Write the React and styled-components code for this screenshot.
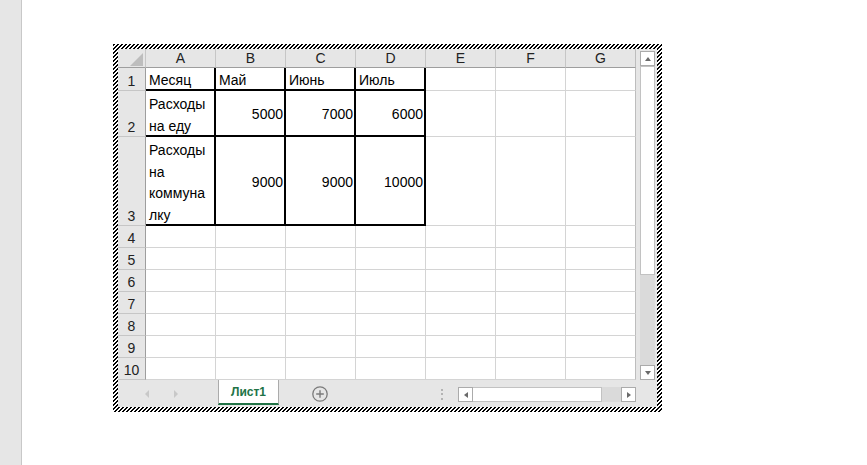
import React from 'react';
import styled, { createGlobalStyle } from 'styled-components';

const GlobalStyle = createGlobalStyle`
  *, *::before, *::after { box-sizing: border-box; }
  html, body { margin: 0; padding: 0; background: #fff; }
  body { font-family: "Liberation Sans", Arial, sans-serif; color: #000; }
`;

const GRID = '#d4d4d4';
const HEAD_LINE = '#c6c6c6';
const HEAD_EDGE = '#9e9e9e';
const GREEN = '#217346';

// 4x4 tile of crisp "/" hatching for the object selection frame
const HATCH_TILE =
  "url(\"data:image/svg+xml,%3Csvg xmlns='http://www.w3.org/2000/svg' width='4' height='4' shape-rendering='crispEdges'%3E%3Cpath d='M0 0h2v1H0zM0 1h1v1H0zM3 1h1v1H3zM2 2h2v1H2zM1 3h2v1H1z' fill='%23000'/%3E%3C/svg%3E\")";

const Page = styled.div`
  display: flex;
  width: 867px;
  height: 465px;
  overflow: hidden;
`;

const SideStrip = styled.div`
  width: 22px;
  flex-shrink: 0;
  background: #e6e6e6;
  border-right: 1px solid #c8c8c8;
`;

const Canvas = styled.div`
  flex: 1;
  padding: 44px 0 0 91px;
`;

const HatchFrame = styled.div`
  width: 549px;
  height: 368px;
  padding: 5px;
  background-color: #fff;
  background-image: ${HATCH_TILE};
  background-size: 4px 4px;
`;

const Workbook = styled.div`
  display: grid;
  grid-template-columns: 518px 21px;
  grid-template-rows: 331px 27px;
  height: 100%;
  background: #fff;
`;

const Sheet = styled.div`
  display: flex;
  flex-direction: column;
`;

const HeaderRow = styled.div`
  display: flex;
  height: 19px;
  background: #e6e6e6;
`;

const Corner = styled.div`
  width: 28px;
  display: flex;
  align-items: flex-end;
  justify-content: flex-end;
  padding: 0 2px 1px 0;
  border-right: 1px solid ${HEAD_LINE};
  border-bottom: 1px solid ${HEAD_EDGE};
`;

const ColHead = styled.div`
  width: 70px;
  display: flex;
  align-items: center;
  justify-content: center;
  font-size: 14px;
  color: #222;
  border-right: 1px solid ${(p) => (p.$last ? '#bdbdbd' : HEAD_LINE)};
  border-bottom: 1px solid ${HEAD_EDGE};
`;

const Row = styled.div`
  display: flex;
  height: ${(p) => p.$h}px;
`;

const RowHead = styled.div`
  width: 28px;
  display: flex;
  align-items: flex-end;
  justify-content: center;
  background: #e6e6e6;
  font-size: 14px;
  line-height: 18px;
  color: #222;
  border-right: 1px solid ${HEAD_EDGE};
  border-bottom: 1px solid ${HEAD_LINE};
`;

const Cell = styled.div`
  width: 70px;
  display: flex;
  align-items: ${(p) => (p.$num ? 'center' : 'flex-end')};
  justify-content: ${(p) => (p.$num ? 'flex-end' : 'flex-start')};
  padding: ${(p) => (p.$num ? '4px 1px 0 2px' : '0 1px 0 3px')};
  font-size: 14px;
  line-height: 21.5px;
  white-space: nowrap;
  border-right: ${(p) =>
    p.$boxed ? '2px solid #000' : `1px solid ${p.$last ? '#bdbdbd' : GRID}`};
  border-bottom: ${(p) => (p.$boxed ? '2px solid #000' : `1px solid ${GRID}`)};
`;

const CellText = styled.span`
  margin-bottom: ${(p) => (p.$num ? 0 : -2)}px;
`;

const VScroll = styled.div`
  display: flex;
  flex-direction: column;
  background: #e6e6e6;
  padding: 2px 2px 0 4px;
`;

const ArrowButton = styled.div`
  width: 15px;
  height: 15px;
  flex-shrink: 0;
  display: flex;
  align-items: center;
  justify-content: center;
  background: #fff;
  border: 1px solid #ababab;
`;

const Triangle = styled.span`
  width: 0;
  height: 0;
  border-style: solid;
  border-color: transparent;
  ${(p) =>
    p.$dir === 'up' && `border-width: 0 3.5px 4px 3.5px; border-bottom-color: ${p.$color};`}
  ${(p) =>
    p.$dir === 'down' && `border-width: 4px 3.5px 0 3.5px; border-top-color: ${p.$color};`}
  ${(p) =>
    p.$dir === 'left' && `border-width: ${p.$h || 3.5}px 4px ${p.$h || 3.5}px 0; border-right-color: ${p.$color};`}
  ${(p) =>
    p.$dir === 'right' && `border-width: ${p.$h || 3.5}px 0 ${p.$h || 3.5}px 4px; border-left-color: ${p.$color};`}
`;

const VTrack = styled.div`
  flex: 1;
  display: flex;
  flex-direction: column;
  background: #dadada;
`;

const VThumb = styled.div`
  height: 209px;
  background: #fff;
  border: 1px solid #c2c2c2;
`;

const TabBar = styled.div`
  grid-column: 1 / -1;
  display: flex;
  align-items: center;
  background: #e6e6e6;
`;

const SheetNav = styled.div`
  width: 100px;
  align-self: stretch;
  display: flex;
  align-items: center;
  gap: 25px;
  padding-left: 27px;
`;

const SheetTab = styled.div`
  width: 61px;
  height: 25px;
  align-self: flex-start;
  display: flex;
  align-items: center;
  justify-content: center;
  padding-top: 1px;
  background: #fff;
  border-left: 1px solid #ababab;
  border-right: 1px solid #ababab;
  border-bottom: 2px solid ${GREEN};
  color: ${GREEN};
  font-size: 12px;
  font-weight: bold;
`;

const AddSheet = styled.div`
  margin-left: 33px;
  width: 16px;
  height: 16px;
  display: flex;
`;

const Spacer = styled.div`
  flex: 1;
`;

const Grip = styled.div`
  display: flex;
  flex-direction: column;
  gap: 2.5px;
  margin-right: 15px;
  padding-top: 1px;

  & span {
    width: 2px;
    height: 2px;
    background: #b3b3b3;
  }
`;

const HScroll = styled.div`
  display: flex;
  width: 178px;
  height: 15px;
  margin-right: 21px;
  margin-top: 2px;
`;

const HThumb = styled.div`
  width: 129px;
  background: #fff;
  border: 1px solid #c2c2c2;
  border-left: none;
`;

const HTrack = styled.div`
  flex: 1;
  background: #dadada;
`;

const columns = ['A', 'B', 'C', 'D', 'E', 'F', 'G'];

const rows = [
  { n: 1, h: 23, cells: ['Месяц', 'Май', 'Июнь', 'Июль'] },
  { n: 2, h: 46, cells: [['Расходы', 'на еду'], 5000, 7000, 6000] },
  { n: 3, h: 89, cells: [['Расходы', 'на', 'коммуна', 'лку'], 9000, 9000, 10000] },
  { n: 4, h: 22 },
  { n: 5, h: 22 },
  { n: 6, h: 22 },
  { n: 7, h: 22 },
  { n: 8, h: 22 },
  { n: 9, h: 22 },
  { n: 10, h: 22 },
];

function CellContent({ value }) {
  if (Array.isArray(value)) {
    return (
      <CellText>
        {value.map((line, i) => (
          <React.Fragment key={i}>
            {i > 0 && <br />}
            {line}
          </React.Fragment>
        ))}
      </CellText>
    );
  }
  return <CellText $num={typeof value === 'number'}>{value}</CellText>;
}

export default function App() {
  return (
    <>
      <GlobalStyle />
      <Page>
        <SideStrip />
        <Canvas>
          <HatchFrame>
            <Workbook>
              <Sheet>
                <HeaderRow>
                  <Corner>
                    <svg width="13" height="13" viewBox="0 0 13 13">
                      <polygon points="13,0 13,13 0,13" fill="#bdbdbd" />
                    </svg>
                  </Corner>
                  {columns.map((c, i) => (
                    <ColHead key={c} $last={i === columns.length - 1}>
                      {c}
                    </ColHead>
                  ))}
                </HeaderRow>
                {rows.map((r) => (
                  <Row key={r.n} $h={r.h}>
                    <RowHead>{r.n}</RowHead>
                    {columns.map((c, i) => {
                      const value = r.cells ? r.cells[i] : undefined;
                      const boxed = !!r.cells && i < 4;
                      return (
                        <Cell
                          key={c}
                          $boxed={boxed}
                          $num={typeof value === 'number'}
                          $last={i === columns.length - 1}
                        >
                          {value !== undefined && <CellContent value={value} />}
                        </Cell>
                      );
                    })}
                  </Row>
                ))}
              </Sheet>

              <VScroll>
                <ArrowButton>
                  <Triangle $dir="up" $color="#6a6a6a" />
                </ArrowButton>
                <VTrack>
                  <VThumb />
                </VTrack>
                <ArrowButton>
                  <Triangle $dir="down" $color="#6a6a6a" />
                </ArrowButton>
              </VScroll>

              <TabBar>
                <SheetNav>
                  <Triangle $dir="left" $color="#c8c8c8" $h={4} />
                  <Triangle $dir="right" $color="#c8c8c8" $h={4} />
                </SheetNav>
                <SheetTab>Лист1</SheetTab>
                <AddSheet>
                  <svg width="16" height="16" viewBox="0 0 16 16">
                    <circle cx="8" cy="8" r="7.2" fill="none" stroke="#7b7b7b" strokeWidth="1.3" />
                    <path d="M8 4.2v7.6M4.2 8h7.6" stroke="#7b7b7b" strokeWidth="1.4" />
                  </svg>
                </AddSheet>
                <Spacer />
                <Grip>
                  <span />
                  <span />
                  <span />
                </Grip>
                <HScroll>
                  <ArrowButton>
                    <Triangle $dir="left" $color="#6a6a6a" />
                  </ArrowButton>
                  <HThumb />
                  <HTrack />
                  <ArrowButton>
                    <Triangle $dir="right" $color="#6a6a6a" />
                  </ArrowButton>
                </HScroll>
              </TabBar>
            </Workbook>
          </HatchFrame>
        </Canvas>
      </Page>
    </>
  );
}
